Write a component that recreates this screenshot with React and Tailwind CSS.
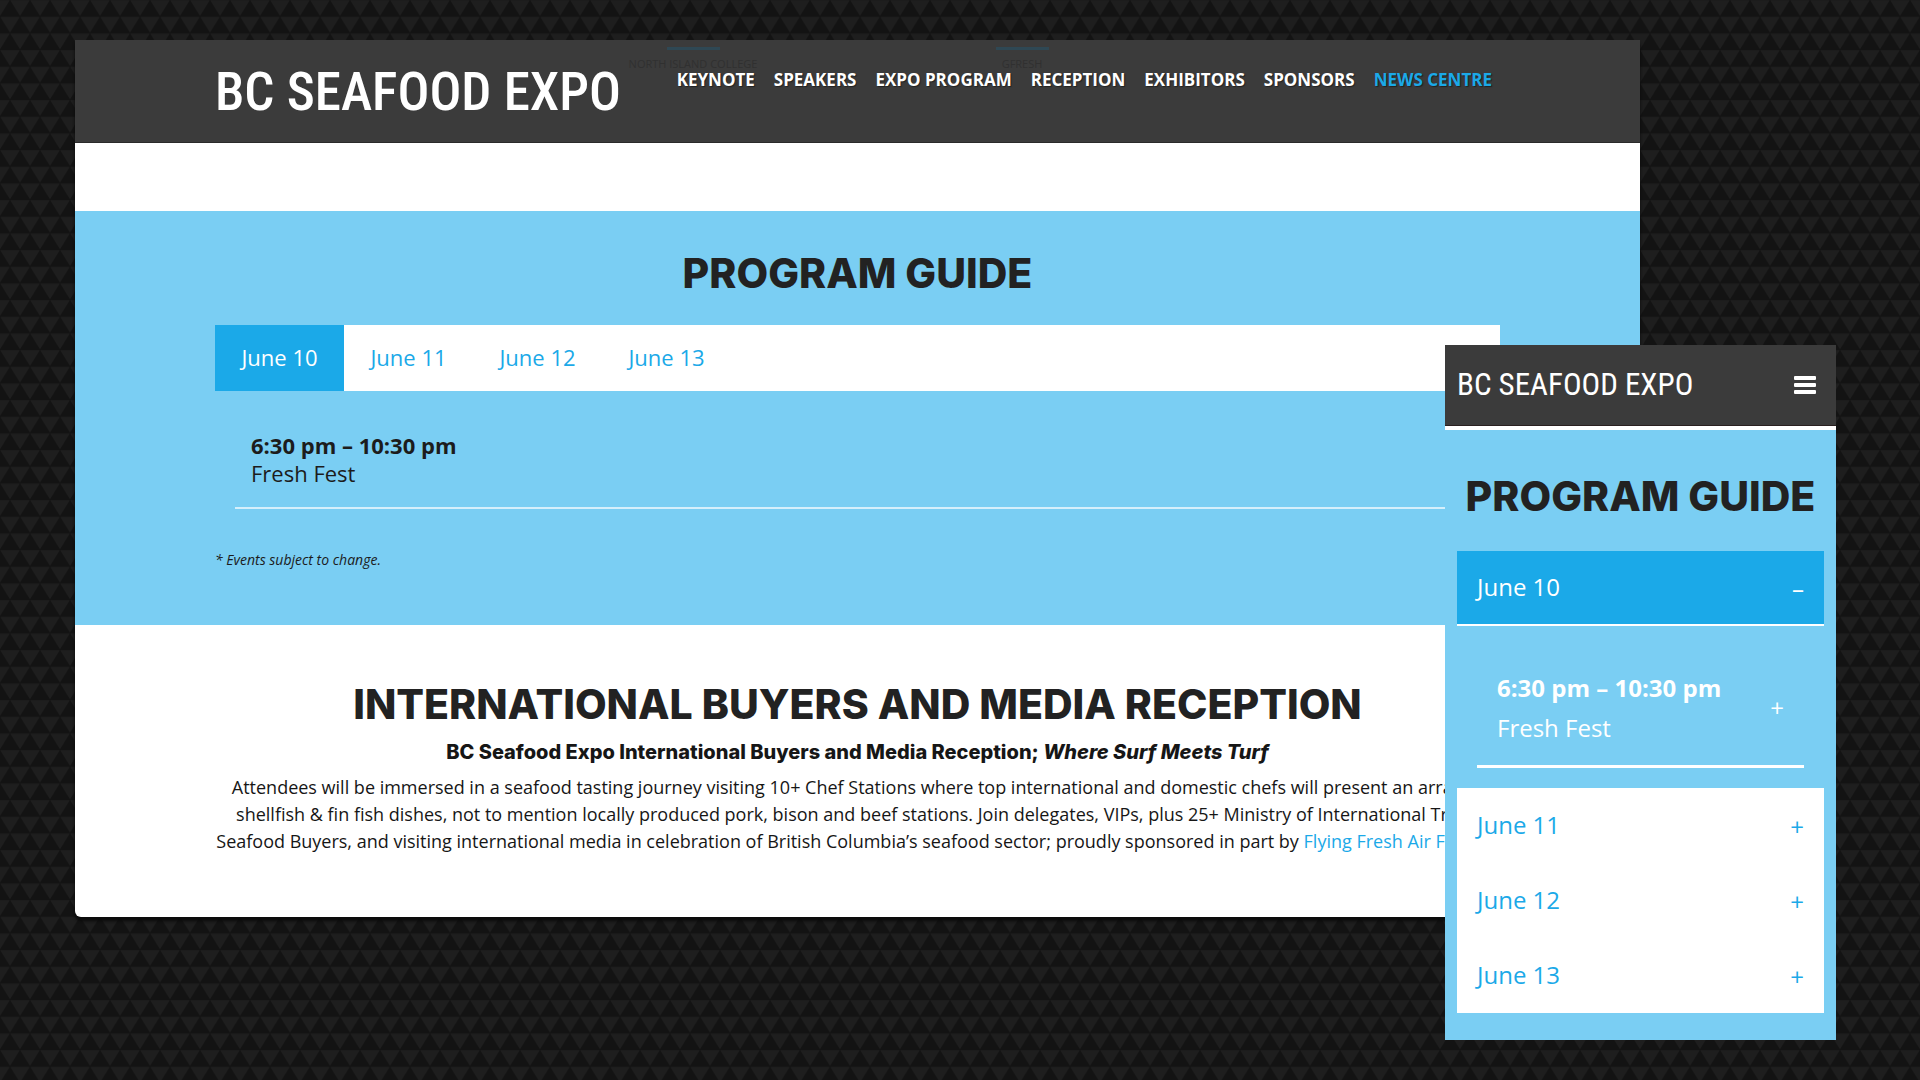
import { useState } from "react";

const navItems = ["Keynote", "Speakers", "Expo Program", "Reception", "Exhibitors", "Sponsors", "News Centre"];
const days = ["June 10", "June 11", "June 12", "June 13"];

function TrianglePattern() {
  return (
    <svg className="absolute inset-0 h-full w-full" aria-hidden="true">
      <defs>
        <pattern id="triangles" width="60" height="100" patternUnits="userSpaceOnUse" patternTransform="scale(0.33333)">
          <rect width="60" height="100" fill="#131313" />
          <path d="M-29 1H29L0 48ZM31 1H89L60 48ZM1 51H59L30 98Z" fill="#1e1e1e" />
        </pattern>
      </defs>
      <rect width="100%" height="100%" fill="url(#triangles)" />
    </svg>
  );
}

function PastSponsor({ name }) {
  return (
    <div className="flex w-[329px] flex-col items-center gap-1.5 pt-[7px]">
      <span className="h-[3px] w-[53px] bg-[#2f4854]" />
      <span className="text-[11px] leading-4 text-[#303030]">{name}</span>
    </div>
  );
}

function DesktopSite({ day, onDay }) {
  return (
    <div className="overflow-hidden rounded-b-md bg-white shadow-[0_4px_3px_#0b0b0b]">
      <header className="relative flex h-[103px] items-start border-b border-[#2a2a2a] bg-[#3b3b3b] px-[140px] text-white">
        <div className="absolute inset-x-0 top-0 flex justify-center" aria-hidden="true">
          <PastSponsor name="NORTH ISLAND COLLEGE" />
          <PastSponsor name="GFRESH" />
        </div>
        <a href="#home" className="relative pt-[21px] font-['Roboto_Condensed',sans-serif] text-[53px] leading-[62px] font-medium whitespace-nowrap">
          BC SEAFOOD EXPO
        </a>
        <nav className="relative ml-auto flex gap-[19px] pt-[30px] pr-2 text-[17px] leading-5 font-bold whitespace-nowrap uppercase [text-shadow:1px_1px_1px_#222]">
          {navItems.map((item) => (
            <a key={item} href={"#" + item.toLowerCase().replace(" ", "-")} className="last:text-[#1ba9e8]">
              {item}
            </a>
          ))}
        </nav>
      </header>

      <section className="mt-[68px] bg-[#7acef3] px-[140px] pt-9 pb-[53px]">
        <h2 className="text-center font-[Inter,sans-serif] text-[41px] leading-[52px] font-extrabold text-[#222]">PROGRAM GUIDE</h2>
        <div role="tablist" className="mt-[26px] flex bg-white">
          {days.map((d) => (
            <button
              key={d}
              role="tab"
              aria-selected={d === day}
              onClick={() => onDay(d)}
              className="h-[66px] w-[129px] pb-0.5 text-[22px] text-[#1ba9e8] aria-selected:bg-[#1ba9e8] aria-selected:text-white"
            >
              {d}
            </button>
          ))}
        </div>
        <div role="tabpanel" className="mx-5 mt-8 border-b-2 border-[#d5effb] px-4 pt-2 pb-5 text-[22px] leading-7 text-[#1c1c1c]">
          <p className="font-bold">6:30 pm – 10:30 pm</p>
          <p>Fresh Fest</p>
        </div>
        <p className="mt-[39px] text-sm leading-6 text-[#1c1c1c] italic">* Events subject to change.</p>
      </section>

      <section className="px-[140px] pt-[53px] pb-[62px] text-center">
        <h2 className="font-[Inter,sans-serif] text-[41px] leading-[52px] font-extrabold text-[#222]">
          INTERNATIONAL BUYERS AND MEDIA RECEPTION
        </h2>
        <h3 className="mt-1.5 font-[Inter,sans-serif] text-xl leading-8 font-extrabold text-[#161616]">
          BC Seafood Expo International Buyers and Media Reception; <em>Where Surf Meets Turf</em>
        </h3>
        <p className="mt-1.5 text-lg leading-[27px] whitespace-nowrap text-[#161616]">
          Attendees will be immersed in a seafood tasting journey visiting 10+ Chef Stations where top international and domestic chefs will present an array of
          <br />
          shellfish &amp; fin fish dishes, not to mention locally produced pork, bison and beef stations. Join delegates, VIPs, plus 25+ Ministry of International Trade
          <br />
          Seafood Buyers, and visiting international media in celebration of British Columbia’s seafood sector; proudly sponsored in part by{" "}
          <a href="#freight" className="text-[#1ba9e8]">Flying Fresh Air Freight.</a>
        </p>
      </section>
    </div>
  );
}

function MobileSite() {
  return (
    <div className="w-[391px] bg-[#7acef3] pb-[27px]">
      <header className="flex h-[81px] items-center justify-between border-b border-[#2a2020] bg-[#3b3b3b] pr-5 pl-3 text-white">
        <a href="#home" className="font-['Roboto_Condensed',sans-serif] text-[31px] leading-9">BC SEAFOOD EXPO</a>
        <button aria-label="Menu">
          <svg width="22" height="18" viewBox="0 0 22 18" fill="white" aria-hidden="true">
            <rect width="22" height="4" rx="1" />
            <rect y="7" width="22" height="4" rx="1" />
            <rect y="14" width="22" height="4" rx="1" />
          </svg>
        </button>
      </header>
      <div className="h-1 bg-white" />
      <div className="px-3 pt-10">
        <h2 className="text-center font-[Inter,sans-serif] text-[41px] leading-[52px] font-extrabold whitespace-nowrap text-[#222]">PROGRAM GUIDE</h2>
        <button
          aria-expanded="true"
          className="mt-[29px] flex h-[75px] w-full items-center justify-between border-b-2 border-white bg-[#1ba9e8] px-5 pb-0.5 text-2xl text-white"
        >
          <span>June 10</span>
          <span className="pt-1">–</span>
        </button>
        <div className="px-5 pt-[38px] pb-5">
          <button className="flex w-full items-center justify-between border-b-[3px] border-white pt-1 pr-5 pb-[17px] pl-5 text-left text-2xl leading-10 text-white">
            <span>
              <span className="block font-bold">6:30 pm – 10:30 pm</span>
              <span className="block">Fresh Fest</span>
            </span>
            <span>+</span>
          </button>
        </div>
        <div className="bg-white">
          {days.slice(1).map((d) => (
            <button key={d} aria-expanded="false" className="flex h-[75px] w-full items-center justify-between px-5 pb-0.5 text-2xl text-[#1ba9e8]">
              <span>{d}</span>
              <span className="pt-1">+</span>
            </button>
          ))}
        </div>
      </div>
    </div>
  );
}

export default function App() {
  const [day, setDay] = useState(days[0]);
  return (
    <main className="relative min-h-screen overflow-hidden bg-[#131313] pt-10 pr-[280px] pb-10 pl-[75px] font-['Open_Sans',sans-serif]">
      <TrianglePattern />
      <div className="relative">
        <DesktopSite day={day} onDay={setDay} />
      </div>
      <div className="absolute top-[345px] right-[84px]">
        <MobileSite />
      </div>
    </main>
  );
}
